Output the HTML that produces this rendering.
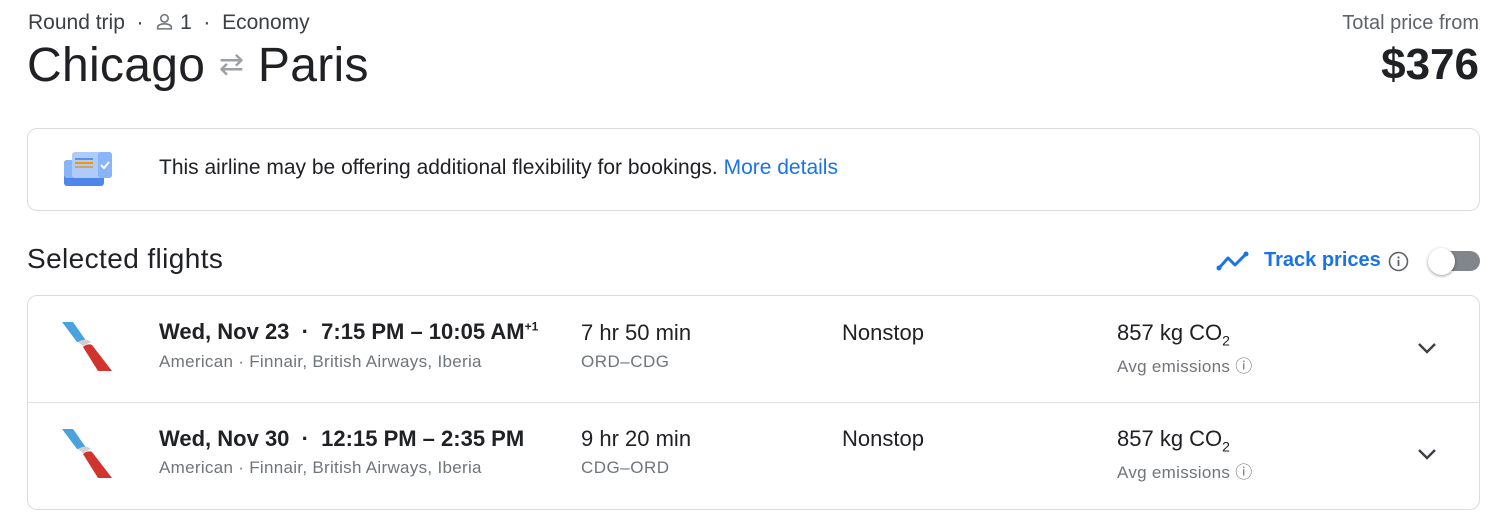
<!DOCTYPE html>
<html><head><meta charset="utf-8"><style>
*{margin:0;padding:0;box-sizing:border-box}
body{width:1500px;height:528px;background:#fff;font-family:"Liberation Sans",Arial,sans-serif;color:#202124;position:relative;overflow:hidden}
.a{position:absolute;white-space:nowrap}
.card{position:absolute;border:1px solid #dadce0;border-radius:10px}
.g{color:#70757a}
</style></head><body>
<div class="a" style="left:28px;top:11px;font-size:21px;color:#3c4043">Round trip &nbsp;·&nbsp;
<svg width="19" height="19" viewBox="0 0 18 18" style="vertical-align:-2px"><circle cx="9" cy="6" r="3.5" fill="none" stroke="#70757a" stroke-width="1.5"/><path d="M2.5 16v-1.5c0-2 3-3.3 6.5-3.3s6.5 1.3 6.5 3.3V16z" fill="none" stroke="#70757a" stroke-width="1.5"/></svg> 1 &nbsp;·&nbsp; Economy</div>
<div class="a" style="left:27px;top:38px;font-size:48px;letter-spacing:0.3px">Chicago <span style="color:#9aa0a6;font-size:30px;vertical-align:7px">&#8644;</span> Paris</div>
<div class="a" style="right:21px;top:12px;font-size:20px;color:#5f6368">Total price from</div>
<div class="a" style="right:21px;top:40px;font-size:44px;font-weight:bold">$376</div>

<div class="card" style="left:27px;top:128px;width:1453px;height:83px"></div>
<svg class="a" style="left:62px;top:150px" width="52" height="38" viewBox="0 0 52 38">
<rect x="2" y="10" width="40" height="26" rx="3" fill="#4f86ec"/><rect x="2" y="10" width="40" height="18" rx="3" fill="#8ab4f8"/>
<rect x="10" y="2" width="40" height="26" rx="3" fill="#aecbfa"/><rect x="36" y="2" width="14" height="26" rx="3" fill="#8ab4f8"/>
<rect x="13" y="8" width="18" height="2" fill="#5f8fe6"/><rect x="13" y="12" width="18" height="2" fill="#f29900"/><rect x="13" y="16" width="18" height="2" fill="#ea8600" opacity=".6"/>
<path d="M39 15l3 3 5-6" stroke="#fff" stroke-width="2" fill="none"/></svg>
<div class="a" style="left:159px;top:156px;font-size:21px">This airline may be offering additional flexibility for bookings. <span style="color:#1a73e8">More details</span></div>

<div class="a" style="left:27px;top:243px;font-size:28px;letter-spacing:0.4px">Selected flights</div>
<svg class="a" style="left:1216px;top:251px" width="34" height="20" viewBox="0 0 34 20"><path d="M3 17l9-10 7 7 11-11" stroke="#1a73e8" stroke-width="3" fill="none" stroke-linejoin="round"/><circle cx="3" cy="17" r="2.5" fill="#1a73e8"/><circle cx="30" cy="3" r="2.5" fill="#1a73e8"/></svg>
<div class="a" style="left:1264px;top:249px;font-size:20px;color:#1a73e8;font-weight:bold">Track prices</div>
<svg class="a" style="left:1388px;top:251px" width="21" height="21" viewBox="0 0 21 21"><circle cx="10.5" cy="10.5" r="9" fill="none" stroke="#5f6368" stroke-width="1.6"/><rect x="9.6" y="9" width="1.8" height="6" fill="#5f6368"/><circle cx="10.5" cy="6.5" r="1.1" fill="#5f6368"/></svg>
<div class="a" style="left:1438px;top:251px;width:42px;height:20px;border-radius:10px;background:#80868b"></div>
<div class="a" style="left:1428px;top:248px;width:27px;height:27px;border-radius:50%;background:#fff;box-shadow:0 1px 3px rgba(0,0,0,.4)"></div>

<div class="card" style="left:27px;top:295px;width:1453px;height:215px"></div>
<div class="a" style="left:28px;top:402px;width:1451px;height:1px;background:#e0e0e0"></div>

<!-- row1 -->
<svg class="a" style="left:62px;top:320px" width="52" height="52" viewBox="0 0 52 52"><path d="M0 2h11l14 20h-10z" fill="#4aa3df"/><path d="M16 22c4-3 10-3 13 0l-8 4z" fill="#d0d0d0"/><path d="M21 27c3-3 7-3 9-2l20 26H36z" fill="#d1332e"/></svg>
<div class="a" style="left:159px;top:319px;font-size:22px;font-weight:bold">Wed, Nov 23 &nbsp;·&nbsp; 7:15 PM – 10:05 AM<sup style="font-size:12px">+1</sup></div>
<div class="a g" style="left:159px;top:352px;font-size:17px;letter-spacing:0.3px">American · Finnair, British Airways, Iberia</div>
<div class="a" style="left:581px;top:320px;font-size:22px">7 hr 50 min</div>
<div class="a g" style="left:581px;top:352px;font-size:17px;letter-spacing:0.5px">ORD–CDG</div>
<div class="a" style="left:842px;top:320px;font-size:22px">Nonstop</div>
<div class="a" style="left:1117px;top:320px;font-size:22px">857 kg CO<sub style="font-size:14px">2</sub></div>
<div class="a g" style="left:1117px;top:352px;font-size:17px;letter-spacing:0.3px">Avg emissions &#9432;</div>
<svg class="a" style="left:1416px;top:341px" width="22" height="14" viewBox="0 0 22 14"><path d="M3 3l8 8 8-8" stroke="#3c4043" stroke-width="2.4" fill="none"/></svg>

<!-- row2 -->
<svg class="a" style="left:62px;top:427px" width="52" height="52" viewBox="0 0 52 52"><path d="M0 2h11l14 20h-10z" fill="#4aa3df"/><path d="M16 22c4-3 10-3 13 0l-8 4z" fill="#d0d0d0"/><path d="M21 27c3-3 7-3 9-2l20 26H36z" fill="#d1332e"/></svg>
<div class="a" style="left:159px;top:426px;font-size:22px;font-weight:bold">Wed, Nov 30 &nbsp;·&nbsp; 12:15 PM – 2:35 PM</div>
<div class="a g" style="left:159px;top:458px;font-size:17px;letter-spacing:0.3px">American · Finnair, British Airways, Iberia</div>
<div class="a" style="left:581px;top:426px;font-size:22px">9 hr 20 min</div>
<div class="a g" style="left:581px;top:458px;font-size:17px;letter-spacing:0.5px">CDG–ORD</div>
<div class="a" style="left:842px;top:426px;font-size:22px">Nonstop</div>
<div class="a" style="left:1117px;top:426px;font-size:22px">857 kg CO<sub style="font-size:14px">2</sub></div>
<div class="a g" style="left:1117px;top:458px;font-size:17px;letter-spacing:0.3px">Avg emissions &#9432;</div>
<svg class="a" style="left:1416px;top:447px" width="22" height="14" viewBox="0 0 22 14"><path d="M3 3l8 8 8-8" stroke="#3c4043" stroke-width="2.4" fill="none"/></svg>
</body></html>
